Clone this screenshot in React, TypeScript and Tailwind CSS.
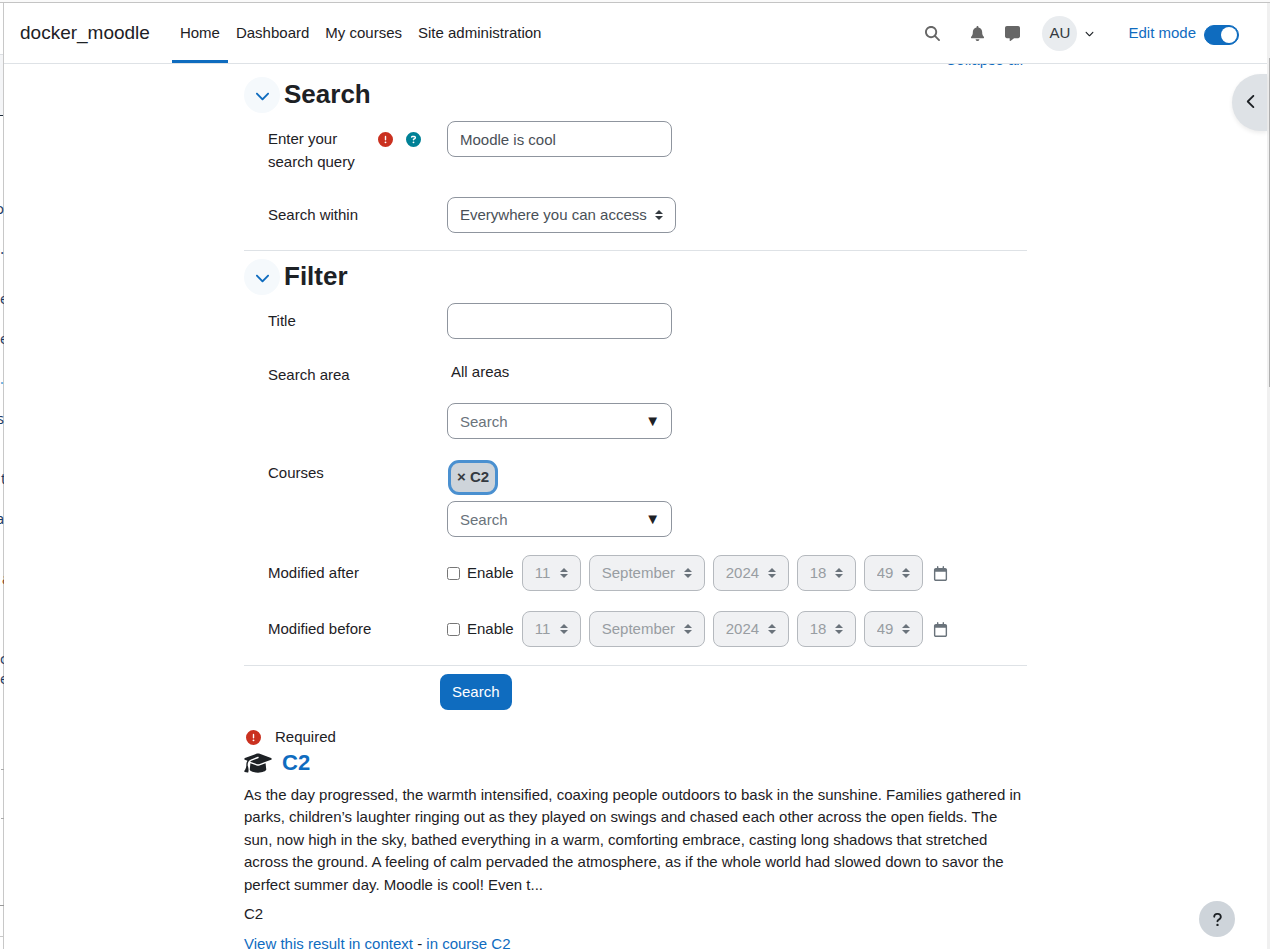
import { ReactNode, useState } from 'react';
import {
  FaBell,
  FaChevronDown,
  FaChevronLeft,
  FaCircleExclamation,
  FaCircleQuestion,
  FaGraduationCap,
  FaMagnifyingGlass,
  FaMessage,
  FaQuestion,
  FaRegCalendar
} from 'react-icons/fa6';

const navItems = ['Home', 'Dashboard', 'My courses', 'Site administration'];

// Sliver of the page that sits behind this window
const backgroundRows = [
  { className: 'mt-[51px] mr-px h-[62px] border-t border-b border-t-[#dcdfe3] border-b-[#1d2b3a] bg-[#f4f5f7]' },
  { className: 'mt-[83px] h-5 justify-end', text: 'o' },
  { className: 'mt-5 h-5 justify-end', text: 'e.' },
  { className: 'mt-[30px] h-5', text: 'e' },
  { className: 'mt-5 h-5', text: 'e' },
  { className: 'mt-5 h-5 text-[#4a9ad4] justify-center', text: '.' },
  { className: 'mt-5 h-5 justify-end', text: 's' },
  { className: 'mt-10 h-5 pl-px', text: 't' },
  { className: 'mt-5 h-5 justify-end', text: 'a' },
  { className: 'mt-10 h-5 pl-0.5 text-[#8a4b2a]', text: 'a' },
  { className: 'mt-[60px] h-5', text: 'c' },
  { className: 'h-5', text: 'e' },
  { className: 'mt-20 ml-px h-px bg-[#aaaaaa]' },
  { className: 'mt-12 ml-px h-px bg-[#aaaaaa]' },
  { className: 'mt-[86px] h-px bg-[#999999]' },
  { className: 'mt-[30px] h-px bg-[#c8c8c8]' }
];

const BackgroundEdge = () => (
  <div
    aria-hidden="true"
    className="flex w-1 shrink-0 flex-col overflow-hidden font-['Noto_Sans',sans-serif] text-sm leading-5 text-[#1d3a63] shadow-[inset_-1px_0_#c8c8c8]"
  >
    {backgroundRows.map((row, index) => (
      <div key={index} className={`flex shrink-0 ${row.className}`}>
        {row.text && <span>{row.text}</span>}
      </div>
    ))}
  </div>
);

const Header = () => {
  const [editMode, setEditMode] = useState(true);

  return (
    <header className="flex h-[61px] shrink-0 items-center border-b border-[#dee2e6] pr-7 pl-4">
      <a href="#" className="mr-[22px] text-[19px]">docker_moodle</a>
      <nav className="flex h-full">
        {navItems.map((item, index) => (
          <a
            key={item}
            href="#"
            className={`flex items-center border-y-[3px] border-t-transparent px-2 ${
              index === 0 ? 'border-b-[#0f6cbf]' : 'border-b-transparent'
            }`}
          >
            {item}
          </a>
        ))}
      </nav>

      <div className="ml-auto flex items-center">
        <button type="button" aria-label="Search" className="mr-[30px] text-[#666666]">
          <FaMagnifyingGlass size={15} />
        </button>
        <button type="button" aria-label="Notifications" className="mr-5 text-[#666666]">
          <FaBell size={15} />
        </button>
        <button type="button" aria-label="Messages" className="mr-[22px] text-[#666666]">
          <FaMessage size={15} />
        </button>
        <button type="button" aria-label="User menu" className="mr-[34px] flex items-center gap-2">
          <span className="flex size-[35px] items-center justify-center rounded-full bg-[#e9ecef] text-[#343a40]">AU</span>
          <FaChevronDown size={9} />
        </button>
        <label htmlFor="edit-mode" className="mr-2 text-[#0f6cbf]">Edit mode</label>
        <input
          id="edit-mode"
          type="checkbox"
          checked={editMode}
          onChange={(e) => setEditMode(e.target.checked)}
          className="mt-1 flex h-5 w-[35px] appearance-none items-center rounded-full border border-[#8f959e] bg-white px-px before:size-4 before:rounded-full before:bg-[#8f959e] checked:justify-end checked:border-[#0f6cbf] checked:bg-[#0f6cbf] checked:before:bg-white"
        />
      </div>
    </header>
  );
};

const SectionHeading = ({ title }: { title: string }) => (
  <div className="mb-2 flex items-start gap-1">
    <button
      type="button"
      aria-label={`Collapse ${title}`}
      className="flex size-9 items-center justify-center rounded-full bg-[#f5f9fc] text-[#0f6cbf]"
    >
      <FaChevronDown size={15} />
    </button>
    <h3 className="text-[26px] leading-[34px] font-bold">{title}</h3>
  </div>
);

type FormRowProps = {
  label: string;
  htmlFor: string;
  icons?: ReactNode;
  className?: string;
  children: ReactNode;
};

const FormRow = ({ label, htmlFor, icons, className = '', children }: FormRowProps) => (
  <div className={`flex items-start ${className}`}>
    <div className="flex w-[203px] shrink-0 items-start pt-[7px] pr-[26px] pl-6">
      <label htmlFor={htmlFor} className="flex-1">{label}</label>
      {icons}
    </div>
    <div className="min-w-0 flex-1">{children}</div>
  </div>
);

const inputClass =
  'h-9 w-[225px] rounded-lg border border-[#8f959e] bg-white px-3 text-[#495057] placeholder:text-[#6a737b]';

type SelectProps = {
  id?: string;
  label?: string;
  value: string;
  width: string;
  disabled?: boolean;
};

const Select = ({ id, label, value, width, disabled = false }: SelectProps) => (
  <div className={`relative ${width} ${disabled ? 'text-[#6a737b]' : 'text-[#343a40]'}`}>
    <select
      id={id}
      aria-label={label}
      defaultValue={value}
      disabled={disabled}
      className="h-9 w-full appearance-none rounded-lg border border-[#8f959e] bg-white pl-3 text-[#495057] disabled:border-[#b5b9be] disabled:bg-[#f0f1f3] disabled:text-[#989da2] disabled:opacity-100"
    >
      <option>{value}</option>
    </select>
    <svg viewBox="0 0 4 5" className="pointer-events-none absolute inset-y-0 right-[13px] my-auto h-2.5 w-2" fill="currentColor">
      <path d="M2 0L0 2h4zm0 5L0 3h4z" />
    </svg>
  </div>
);

const AutocompleteInput = ({ id }: { id: string }) => (
  <div className="relative w-[225px]">
    <input id={id} type="text" placeholder="Search" className={inputClass} />
    <span className="pointer-events-none absolute inset-y-0 right-3 flex items-center">▼</span>
  </div>
);

const DateSelector = ({ id }: { id: string }) => {
  const [enabled, setEnabled] = useState(false);

  return (
    <div className="flex items-center gap-2">
      <label className="flex items-center gap-[7px]">
        <input id={id} type="checkbox" checked={enabled} onChange={(e) => setEnabled(e.target.checked)} className="size-[13px]" />
        Enable
      </label>
      <Select label="Day" value="11" width="w-[59px]" disabled={!enabled} />
      <Select label="Month" value="September" width="w-[116px]" disabled={!enabled} />
      <Select label="Year" value="2024" width="w-[76px]" disabled={!enabled} />
      <Select label="Hour" value="18" width="w-[59px]" disabled={!enabled} />
      <Select label="Minute" value="49" width="w-[59px]" disabled={!enabled} />
      <button type="button" aria-label="Calendar" className="ml-0.5 text-[#6a737b]">
        <FaRegCalendar size={15} />
      </button>
    </div>
  );
};

const SearchForm = () => (
  <form onSubmit={(e) => e.preventDefault()}>
    <section className="border-b border-[#dee2e6] pb-[17px]">
      <SectionHeading title="Search" />
      <FormRow
        label="Enter your search query"
        htmlFor="query"
        className="mb-6"
        icons={
          <span className="flex h-[22px] items-center gap-[13px]">
            <FaCircleExclamation size={15} className="text-[#ca3120]" />
            <FaCircleQuestion size={15} className="text-[#008196]" />
          </span>
        }
      >
        <input id="query" type="text" defaultValue="Moodle is cool" className={inputClass} />
      </FormRow>
      <FormRow label="Search within" htmlFor="within">
        <Select id="within" value="Everywhere you can access" width="w-[229px]" />
      </FormRow>
    </section>

    <section className="border-b border-[#dee2e6] pt-2 pb-[18px]">
      <SectionHeading title="Filter" />
      <FormRow label="Title" htmlFor="title" className="mb-[18px]">
        <input id="title" type="text" className={inputClass} />
      </FormRow>
      <FormRow label="Search area" htmlFor="area" className="mb-4">
        <div className="mb-[18px] h-7 px-1 py-1">All areas</div>
        <AutocompleteInput id="area" />
      </FormRow>
      <FormRow label="Courses" htmlFor="courses" className="mb-[18px]">
        <div className="mb-1.5 pt-[5px]">
          <button
            type="button"
            className="ml-px flex h-[35px] items-center rounded-[11px] border-[3px] border-[#4a90d0] bg-[#ced4da] px-1.5 font-bold text-[#343a40]"
          >
            × C2
          </button>
        </div>
        <AutocompleteInput id="courses" />
      </FormRow>
      <FormRow label="Modified after" htmlFor="after" className="mb-5">
        <DateSelector id="after" />
      </FormRow>
      <FormRow label="Modified before" htmlFor="before">
        <DateSelector id="before" />
      </FormRow>
    </section>

    <div className="pt-2 pl-[196px]">
      <button type="submit" className="h-9 rounded-lg bg-[#0f6cbf] px-3 text-white">
        Search
      </button>
    </div>
    <div className="mt-4 flex items-center gap-3.5 pl-0.5">
      <FaCircleExclamation size={15} className="text-[#ca3120]" />
      Required
    </div>
  </form>
);

const SearchResult = () => (
  <article>
    <h4 className="mb-[7px] flex items-center gap-2.5 text-[22px] leading-7 font-bold">
      <FaGraduationCap className="h-[22px] w-7" />
      <a href="#" className="text-[#0f6cbf]">C2</a>
    </h4>
    <p className="mb-[7px]">
      As the day progressed, the warmth intensified, coaxing people outdoors to bask in the sunshine. Families gathered in
      parks, children’s laughter ringing out as they played on swings and chased each other across the open fields. The
      sun, now high in the sky, bathed everything in a warm, comforting embrace, casting long shadows that stretched across
      the ground. A feeling of calm pervaded the atmosphere, as if the whole world had slowed down to savor the perfect
      summer day. Moodle is cool! Even t...
    </p>
    <div className="mb-[7px]">C2</div>
    <div>
      <a href="#" className="text-[#0f6cbf]">View this result in context</a>
      {' - '}
      <a href="#" className="text-[#0f6cbf]">in course C2</a>
    </div>
  </article>
);

export default function App() {
  return (
    <div className="flex h-screen flex-col overflow-hidden bg-white font-['Liberation_Sans',Arial,sans-serif] text-[15px] leading-normal text-[#1d2125]">
      <div className="h-[3px] shrink-0 border-b border-[#c4c4c4] bg-[#fafafa]" />
      <div className="flex min-h-0 flex-1">
        <BackgroundEdge />

        <div className="relative flex min-w-0 flex-1 flex-col">
          <Header />
          <main className="min-h-0 flex-1 overflow-hidden">
            <div className="mx-auto max-w-[783px]">
              {/* Scrolled under the header */}
              <div className="mb-1.5 flex h-[7px] items-end justify-end overflow-hidden pr-1">
                <a href="#" className="text-[#0f6cbf]">Collapse all</a>
              </div>
              <SearchForm />
              <SearchResult />
            </div>
          </main>

          <button
            type="button"
            aria-label="Open block drawer"
            className="absolute top-[71px] right-0 flex h-[57px] w-[35px] items-center justify-center rounded-l-full bg-[#dee2e6] pb-0.5 pl-[3px] shadow-[0_2px_4px_rgba(0,0,0,0.08)]"
          >
            <FaChevronLeft size={15} />
          </button>
          <button
            type="button"
            aria-label="Help"
            className="absolute right-8 bottom-3 flex size-9 items-center justify-center rounded-full bg-[#ced4da]"
          >
            <FaQuestion size={15} />
          </button>
        </div>

        <div aria-hidden="true" className="flex w-[3px] shrink-0 justify-end bg-[#f0f0f0] pt-[55px]">
          <div className="h-[329px] w-px bg-[#b0b0b0]" />
        </div>
      </div>
    </div>
  );
}
